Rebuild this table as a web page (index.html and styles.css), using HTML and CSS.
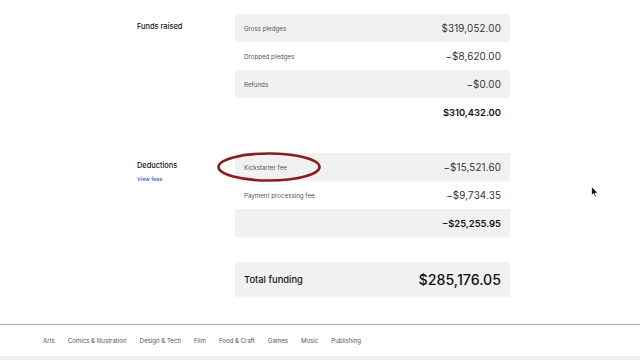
FILE: index.html
```html
<!DOCTYPE html>
<html>
<head>
<meta charset="utf-8">
<link rel="stylesheet" href="styles.css">
</head>
<body>
<main class="page">
  <section class="section funds">
    <div class="side"><div class="side-title">Funds raised</div></div>
    <div class="table">
      <div class="row shade"><span class="label">Gross pledges</span><span class="value">$319,052.00</span></div>
      <div class="row"><span class="label">Dropped pledges</span><span class="value">−$8,620.00</span></div>
      <div class="row shade"><span class="label">Refunds</span><span class="value">−$0.00</span></div>
      <div class="row"><span class="label"></span><span class="value strong">$310,432.00</span></div>
    </div>
  </section>
  <section class="section deductions">
    <div class="side"><div class="side-title">Deductions</div><a class="side-link">View fees</a></div>
    <div class="table">
      <div class="row shade circled"><span class="label">Kickstarter fee</span><span class="value">−$15,521.60</span>
        <svg class="ring" width="106" height="32" viewBox="0 0 106 32"><ellipse cx="53" cy="16" rx="50.5" ry="13.5" fill="none" stroke="#8a1c1f" stroke-width="2.6"/></svg>
      </div>
      <div class="row"><span class="label">Payment processing fee</span><span class="value">−$9,734.35</span></div>
      <div class="row shade"><span class="label"></span><span class="value strong">−$25,255.95</span></div>
    </div>
  </section>
  <section class="section total">
    <div class="side"></div>
    <div class="total-box"><span class="total-label">Total funding</span><span class="total-value">$285,176.05</span></div>
  </section>
</main>
<footer class="footer">
  <nav class="nav">
    <a>Arts</a><a>Comics &amp; Illustration</a><a>Design &amp; Tech</a><a>Film</a><a>Food &amp; Craft</a><a>Games</a><a>Music</a><a>Publishing</a>
  </nav>
  <div class="footer-bar"></div>
</footer>
<svg class="cursor" width="8" height="12" viewBox="0 0 8 12"><path d="M0.5 0.5 L0.5 9.5 L2.6 7.6 L4 11 L5.4 10.4 L4 7.2 L7 7.2 Z" fill="#111" stroke="#fff" stroke-width="0.8"/></svg>
</body>
</html>
```
FILE: styles.css
```css
* { box-sizing: border-box; }
html, body { margin: 0; padding: 0; background: #fff; }
body {
  width: 640px; height: 360px; overflow: hidden; position: relative;
  font-family: Inter, "Noto Sans", sans-serif; color: #222;
}
.page { padding-top: 14px; height: 324px; }
.section {
  display: grid;
  grid-template-columns: 98px 275px;
  margin-left: 137px;
}
.deductions { margin-top: 27px; }
.total { margin-top: 25px; }
.side { padding-top: 8px; }
.side-title { font-size: 7.4px; font-weight: 500; color: #111; line-height: 10px; }
.side-link { display: block; margin-top: 4px; font-size: 5.4px; font-weight: 500; color: #2b58c9; line-height: 8px; }
.table { display: flex; flex-direction: column; }
.row {
  height: 28px; display: flex; align-items: center; justify-content: space-between;
  padding: 0 9px 0 9px; position: relative;
}
.shade { background: #f1f1f1; }
.label { font-size: 6.2px; color: #555; }
.value { font-size: 9.8px; color: #333; letter-spacing: 0.15px; }
.strong { font-weight: 600; color: #111; font-size: 9.4px; letter-spacing: 0; }
.ring { position: absolute; left: -19px; top: -2px; }
.total-box {
  height: 35px; background: #f1f1f1; display: flex; align-items: center; justify-content: space-between;
  padding: 0 9px;
}
.total-label { font-size: 9.4px; font-weight: 500; color: #111; }
.total-value { font-size: 14.2px; font-weight: 500; color: #111; }
.footer { border-top: 1.5px solid #a8a8a8; }
.nav { height: 31px; display: flex; align-items: center; gap: 13px; padding-left: 43px; }
.nav a { font-size: 6.1px; color: #555; }
.footer-bar { height: 6px; background: #efefef; }
.cursor { position: absolute; left: 591px; top: 186px; }
```
